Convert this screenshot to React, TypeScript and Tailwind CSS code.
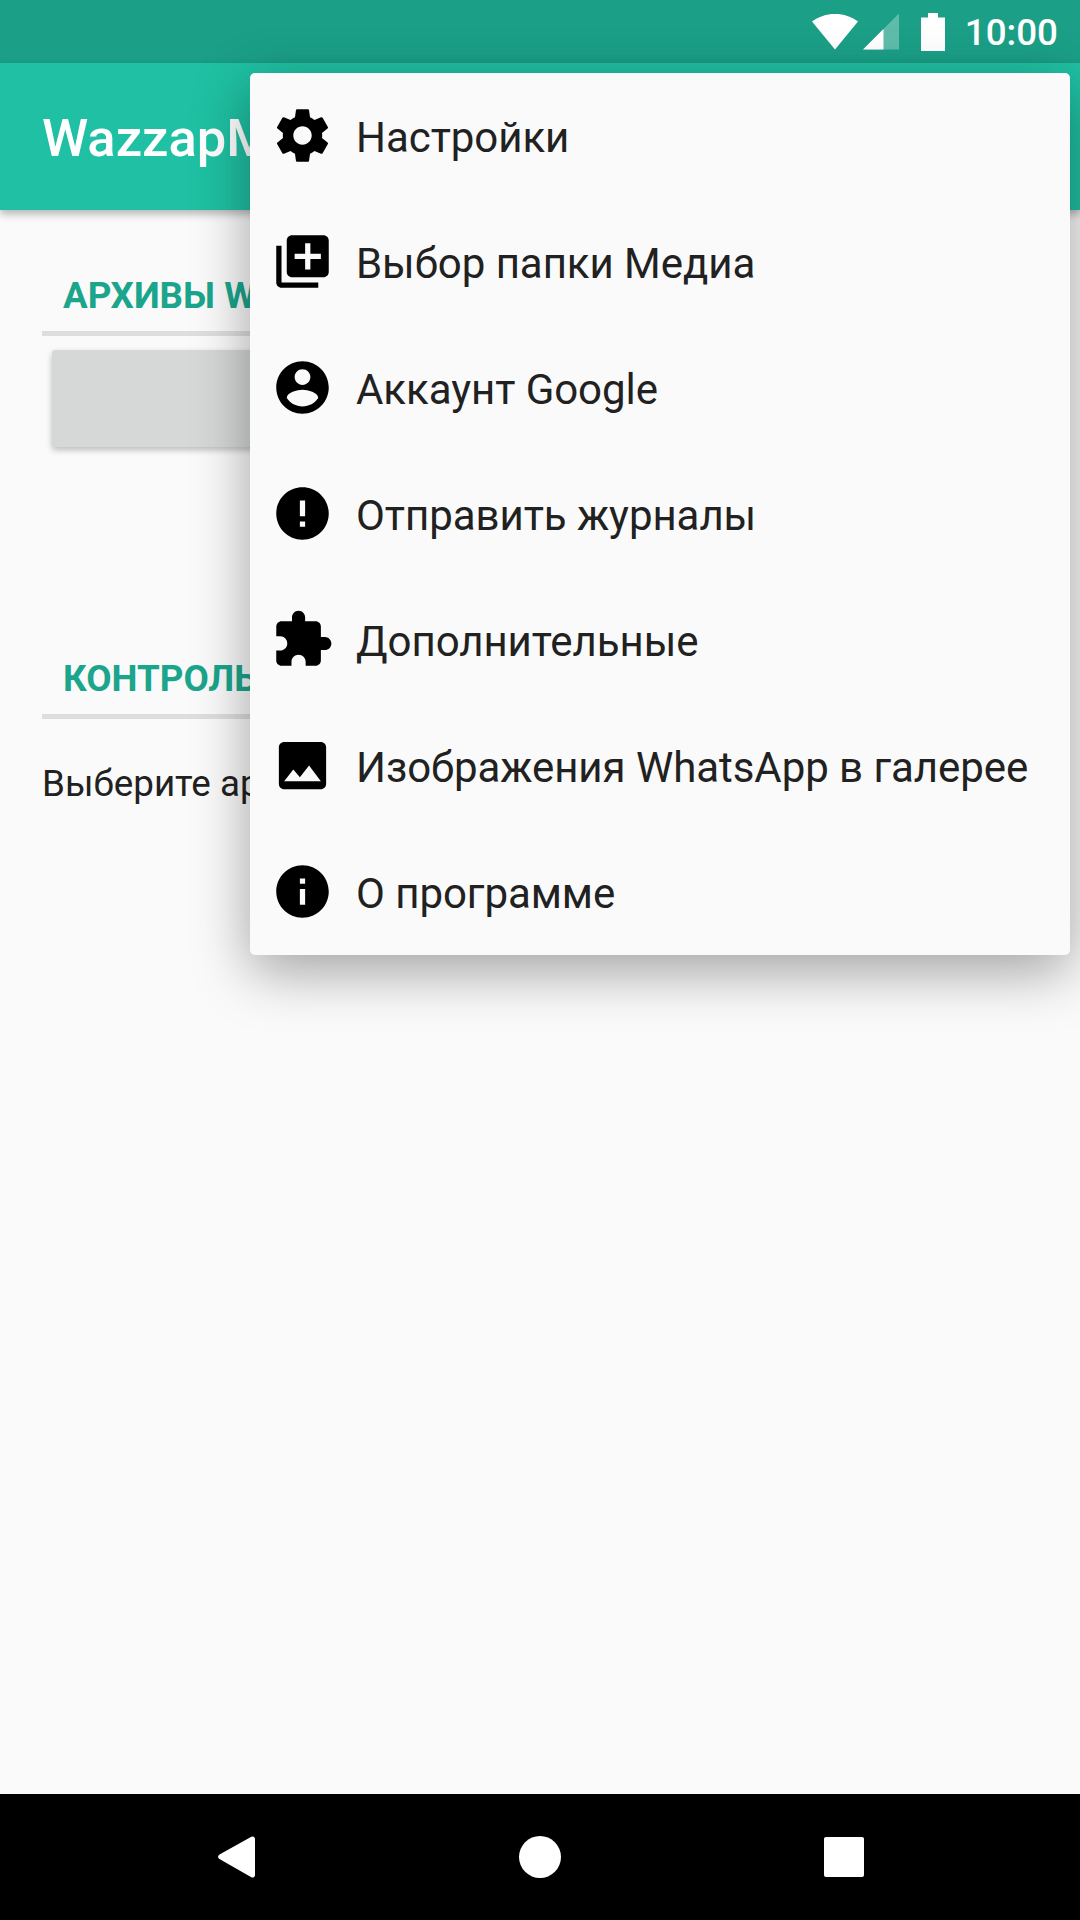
const P = {
  settings: "M19.43 12.98c.04-.32.07-.64.07-.98s-.03-.66-.07-.98l2.11-1.65c.19-.15.24-.42.12-.64l-2-3.46c-.12-.22-.39-.3-.61-.22l-2.49 1c-.52-.4-1.08-.73-1.69-.98l-.38-2.65C14.46 2.18 14.25 2 14 2h-4c-.25 0-.46.18-.49.42l-.38 2.65c-.61.25-1.17.59-1.69.98l-2.49-1c-.23-.09-.49 0-.61.22l-2 3.46c-.13.22-.07.49.12.64l2.11 1.65c-.04.32-.07.65-.07.98s.03.66.07.98l-2.11 1.65c-.19.15-.24.42-.12.64l2 3.46c.12.22.39.3.61.22l2.49-1c.52.4 1.08.73 1.69.98l.38 2.65c.03.24.24.42.49.42h4c.25 0 .46-.18.49-.42l.38-2.65c.61-.25 1.17-.59 1.69-.98l2.49 1c.23.09.49 0 .61-.22l2-3.46c.12-.22.07-.49-.12-.64l-2.11-1.65zM12 15.5c-1.93 0-3.5-1.57-3.5-3.5s1.57-3.5 3.5-3.5 3.5 1.57 3.5 3.5-1.57 3.5-3.5 3.5z",
  library: "M4 6H2v14c0 1.1.9 2 2 2h14v-2H4V6zm16-4H8c-1.1 0-2 .9-2 2v12c0 1.1.9 2 2 2h12c1.1 0 2-.9 2-2V4c0-1.1-.9-2-2-2zm-1 9h-4v4h-2v-4H9V9h4V5h2v4h4v2z",
  account: "M12 2C6.48 2 2 6.48 2 12s4.48 10 10 10 10-4.48 10-10S17.52 2 12 2zm0 3c1.66 0 3 1.34 3 3s-1.34 3-3 3-3-1.34-3-3 1.34-3 3-3zm0 14.2c-2.5 0-4.71-1.28-6-3.22.03-1.99 4-3.08 6-3.08 1.99 0 5.97 1.09 6 3.08-1.29 1.94-3.5 3.22-6 3.22z",
  error: "M12 2C6.48 2 2 6.48 2 12s4.48 10 10 10 10-4.48 10-10S17.52 2 12 2zm1 15h-2v-2h2v2zm0-4h-2V7h2v6z",
  extension: "M20.5 11H19V7c0-1.1-.9-2-2-2h-4V3.5C13 2.12 11.88 1 10.5 1S8 2.12 8 3.5V5H4c-1.1 0-1.99.9-1.99 2v3.8H3.5c1.49 0 2.7 1.21 2.7 2.7s-1.21 2.7-2.7 2.7H2V20c0 1.1.9 2 2 2h3.8v-1.5c0-1.49 1.21-2.7 2.7-2.7 1.49 0 2.7 1.21 2.7 2.7V22H17c1.1 0 2-.9 2-2v-4h1.5c1.38 0 2.5-1.12 2.5-2.5S21.88 11 20.5 11z",
  photo: "M21 19V5c0-1.1-.9-2-2-2H5c-1.1 0-2 .9-2 2v14c0 1.1.9 2 2 2h14c1.1 0 2-.9 2-2zM8.5 13.5l2.5 3.01L14.5 12l4.5 6H5l3.5-4.5z",
  info: "M12 2C6.48 2 2 6.48 2 12s4.48 10 10 10 10-4.48 10-10S17.52 2 12 2zm1 15h-2v-6h2v6zm0-8h-2V7h2v2z",
};

const items = [
  { icon: P.settings, label: "Настройки" },
  { icon: P.library, label: "Выбор папки Медиа" },
  { icon: P.account, label: "Аккаунт Google" },
  { icon: P.error, label: "Отправить журналы" },
  { icon: P.extension, label: "Дополнительные" },
  { icon: P.photo, label: "Изображения WhatsApp в галерее" },
  { icon: P.info, label: "О программе" },
];

function SectionTitle({ text, className }: { text: string; className: string }) {
  return (
    <div className={`mx-[42px] h-[82px] pl-[21px] pt-[6px] flex items-center border-b-[5px] border-[#dedede] text-[36.75px] font-bold text-[#1ba58c] whitespace-nowrap overflow-hidden ${className}`}>
      {text}
    </div>
  );
}

export default function App() {
  return (
    <div className="relative w-[1080px] h-[1920px] overflow-hidden flex flex-col bg-[#fafafa] [font-family:Roboto,sans-serif]">
      <div className="h-[63px] shrink-0 bg-[#1b9f87] flex items-center justify-end pr-[22px] text-white">
        <svg width="90" height="40" viewBox="0 0 90 40" className="mr-[22px]">
          <path d="M3 8.5C10 3.5 17 1 26 1s16 2.5 23 7.5L26 36.5z" fill="#fff" transform="translate(0 1)" />
          <path d="M54 37.5 L90 1.5 V37.5z" fill="#fff" fillOpacity="0.3" />
          <path d="M54 37.5 L74.5 17 V37.5z" fill="#fff" />
        </svg>
        <svg width="24" height="38" viewBox="0 0 24 38" className="mr-[20px]">
          <path d="M0 4.5h7V0h10v4.5h7V38H0z" fill="#fff" />
        </svg>
        <span className="text-[36.75px] leading-none font-medium pt-[4px]">10:00</span>
      </div>

      <div className="relative z-10 h-[147px] shrink-0 bg-[#1fc0a3] shadow-[0_4px_8px_rgba(0,0,0,0.28)] flex items-center pl-[42px] pt-[4px]">
        <span className="text-[52.5px] font-medium text-white">WazzapMigrator</span>
      </div>

      <div className="flex-1 flex flex-col">
        <SectionTitle text="АРХИВЫ WHATSAPP" className="mt-[44px]" />
        <div className="mt-[14px] ml-[52px] mr-[51px] h-[97px] shrink-0 rounded-[3px] bg-[#d6d8d7] shadow-[0_3px_6px_rgba(0,0,0,0.25)]" />
        <SectionTitle text="КОНТРОЛЬНЫЕ СПИСКИ" className="mt-[190px]" />
        <div className="mt-[40px] ml-[42px] h-[50px] flex items-center text-[36.75px] text-[#212121]">Выберите архив</div>
      </div>

      <div className="h-[126px] shrink-0 bg-black flex items-center">
        <svg width="1080" height="126" viewBox="0 0 1080 126">
          <path d="M219.5 60.5 L250 43.5 C252.5 41.5 255 42.500 255 45 V81 C255 83.500 252.500 84.500 250 82.500 L219.500 65 C217.500 63.500 217.500 62 219.500 60.500z" fill="#fff" />
          <circle cx="540" cy="63" r="21" fill="#fff" />
          <rect x="824" y="43" width="40" height="40" rx="2" fill="#fff" />
        </svg>
      </div>

      <div className="absolute z-20 left-[250px] top-[73px] w-[820px] h-[882px] rounded-[5px] bg-[#fafafa] shadow-[0_16px_56px_rgba(0,0,0,0.36)] text-[#212121]">
        {items.map((it) => (
          <div key={it.label} className="h-[126px] -translate-y-px flex items-center pl-[21px]">
            <svg width="63" height="63" viewBox="0 0 24 24" fill="#000" className="shrink-0">
              <path d={it.icon} />
            </svg>
            <span className="ml-[22px] pt-[4px] text-[42px] tracking-[-0.05px] whitespace-nowrap">{it.label}</span>
          </div>
        ))}
      </div>
    </div>
  );
}
